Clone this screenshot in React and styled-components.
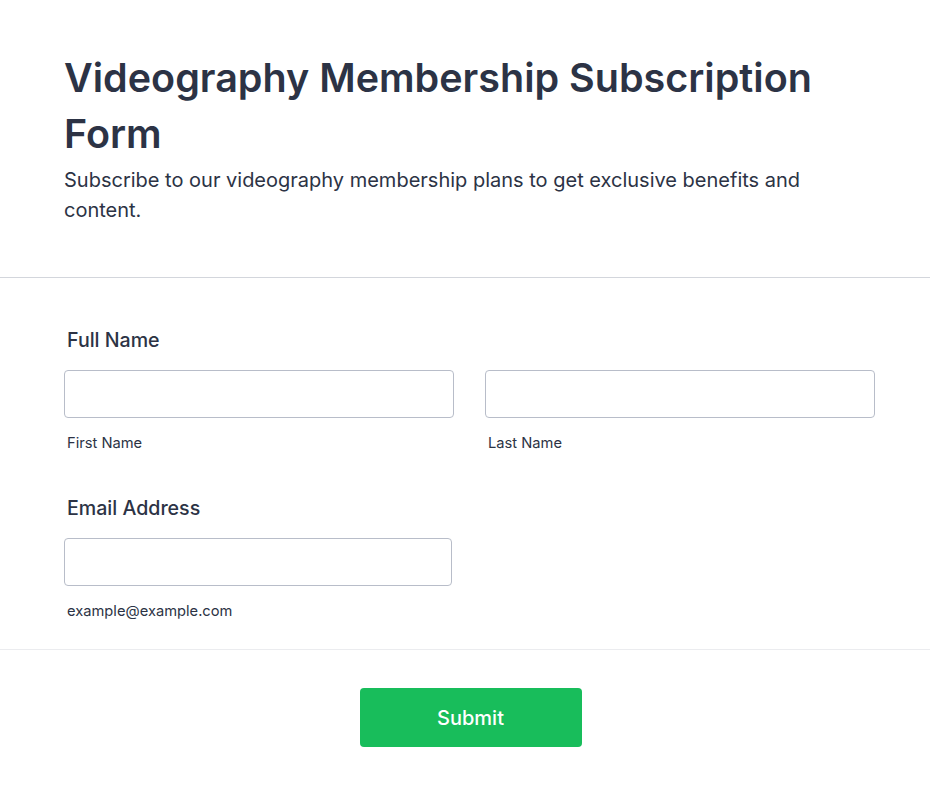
import styled, { createGlobalStyle } from "styled-components";

const GlobalStyle = createGlobalStyle`
    body {
        margin: 0;
        background: #ffffff;
        font-family: Inter, "Noto Sans", sans-serif;
        color: #2c3345;
    }
`

export default function App() {
    return (
        <>
            <GlobalStyle />
            <Page>
                <Header>
                    <Title>Videography Membership Subscription Form</Title>
                    <Subtitle>
                        Subscribe to our videography membership plans to get exclusive benefits and content.
                    </Subtitle>
                </Header>
                <FormSection>
                    <Field>
                        <FieldLabel>Full Name</FieldLabel>
                        <NameRow>
                            <InputGroup>
                                <TextInput type="text" />
                                <SubLabel>First Name</SubLabel>
                            </InputGroup>
                            <InputGroup>
                                <TextInput type="text" />
                                <SubLabel>Last Name</SubLabel>
                            </InputGroup>
                        </NameRow>
                    </Field>
                    <Field>
                        <FieldLabel>Email Address</FieldLabel>
                        <InputGroup $width="388px">
                            <TextInput type="email" />
                            <SubLabel>example@example.com</SubLabel>
                        </InputGroup>
                    </Field>
                </FormSection>
                <Footer>
                    <SubmitBtn type="button">Submit</SubmitBtn>
                </Footer>
            </Page>
        </>
    )
}

const Page = styled.div`
    width: 930px;
    display: flex;
    flex-direction: column;
`

const Header = styled.div`
    padding: 50px 64px 52px;
    border-bottom: 1px solid #d3d6dc;
    display: flex;
    flex-direction: column;
    gap: 3px;
`

const Title = styled.h1`
    margin: 0;
    font-size: 39.5px;
    font-weight: 600;
    line-height: 56px;
    color: #2c3345;
    max-width: 780px;
`

const Subtitle = styled.p`
    margin: 0;
    font-size: 20px;
    line-height: 30px;
    font-weight: 400;
    color: #2c3345;
    max-width: 760px;
`

const FormSection = styled.div`
    padding: 50px 55px 28px 64px;
    border-bottom: 1px solid #ebecef;
    display: flex;
    flex-direction: column;
    gap: 43px;
`

const Field = styled.div`
    display: flex;
    flex-direction: column;
`

const FieldLabel = styled.label`
    font-size: 19.6px;
    line-height: 24px;
    font-weight: 500;
    color: #2c3345;
    margin: 0 0 18px 3px;
`

const NameRow = styled.div`
    display: grid;
    grid-template-columns: 390px 390px;
    column-gap: 31px;
`

const InputGroup = styled.div`
    display: flex;
    flex-direction: column;
    gap: 15px;
    width: ${(p) => p.$width || "auto"};
`

const TextInput = styled.input`
    box-sizing: border-box;
    height: 48px;
    width: 100%;
    border: 1px solid #b8bdc9;
    border-radius: 4px;
    background: #ffffff;
    padding: 0 12px;
    font-family: inherit;
    font-size: 16px;
    outline: none;
`

const SubLabel = styled.span`
    font-size: 14.7px;
    line-height: 20px;
    color: #2c3345;
    margin-left: 3px;
`

const Footer = styled.div`
    display: flex;
    justify-content: center;
    padding: 38px 0 50px 11px;
`

const SubmitBtn = styled.button`
    width: 222px;
    height: 59px;
    border: none;
    border-radius: 4px;
    background-color: #18bd5b;
    color: #ffffff;
    font-family: inherit;
    font-size: 20px;
    font-weight: 500;
    cursor: pointer;
`
